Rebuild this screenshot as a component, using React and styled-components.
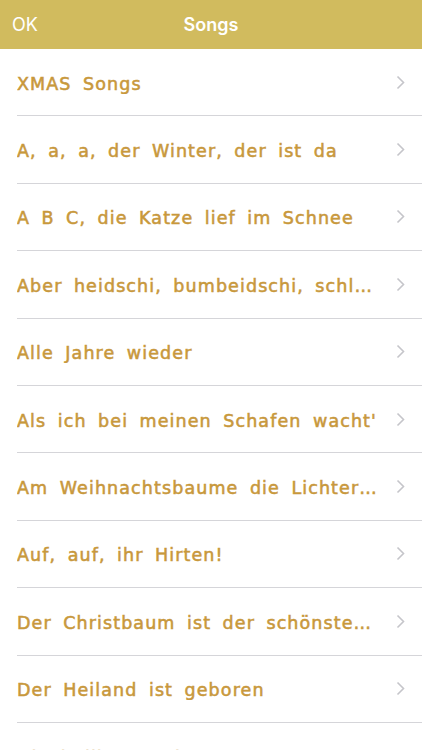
import React from 'react';
import styled, { createGlobalStyle } from 'styled-components';

const songs = [
  'XMAS Songs',
  'A, a, a, der Winter, der ist da',
  'A B C, die Katze lief im Schnee',
  'Aber heidschi, bumbeidschi, schlaf ein',
  'Alle Jahre wieder',
  "Als ich bei meinen Schafen wacht'",
  'Am Weihnachtsbaume die Lichter brennen',
  'Auf, auf, ihr Hirten!',
  'Der Christbaum ist der schönste Baum',
  'Der Heiland ist geboren',
  'Die heilige Nacht',
];

const GlobalStyle = createGlobalStyle`
  html, body {
    margin: 0;
    padding: 0;
    background: #fff;
  }
  body {
    font-family: Inter, "Liberation Sans", sans-serif;
    overflow: hidden;
  }
`;

function Chevron() {
  return (
    <svg width="9" height="15" viewBox="0 0 9 15">
      <path d="M1.5 1.5 L7.5 7.5 L1.5 13.5" fill="none" stroke="#c5c5ca" strokeWidth="1.6" />
    </svg>
  );
}

function App() {
  return (
    <Screen>
      <GlobalStyle />
      <NavBar>
        <NavButton>OK</NavButton>
        <Title>Songs</Title>
        <span />
      </NavBar>
      <List>
        {songs.map((song, idx) => (
          <Row key={idx}>
            <SongName>{song}</SongName>
            <Chevron />
          </Row>
        ))}
      </List>
    </Screen>
  );
}

const Screen = styled.div`
  width: 422px;
  height: 750px;
  overflow: hidden;
  background: #fff;
`;

const NavBar = styled.div`
  height: 49px;
  background-color: #d1bb5e;
  display: grid;
  grid-template-columns: 1fr auto 1fr;
  align-items: center;
  padding: 0 12px;
  box-sizing: border-box;
  color: #fff;
`;

const NavButton = styled.span`
  font-size: 18px;
  font-weight: 400;
`;

const Title = styled.span`
  font-weight: 600;
  font-size: 18px;
`;

const List = styled.div`
  display: flex;
  flex-direction: column;
`;

const Row = styled.div`
  height: 67.4px;
  margin-left: 17px;
  padding-right: 17px;
  border-bottom: 1px solid #d5d5d9;
  box-sizing: border-box;
  display: flex;
  align-items: center;
  justify-content: space-between;
  gap: 14px;
`;

const SongName = styled.span`
  font-family: "DejaVu Sans", sans-serif;
  font-weight: 400;
  font-size: 17.5px;
  letter-spacing: 1.1px;
  word-spacing: 4.8px;
  -webkit-text-stroke: 0.55px #c8983c;
  color: #c8983c;
  white-space: nowrap;
  overflow: hidden;
  text-overflow: ellipsis;
  flex: 1;
  padding-top: 3px;
`;

export default App;
